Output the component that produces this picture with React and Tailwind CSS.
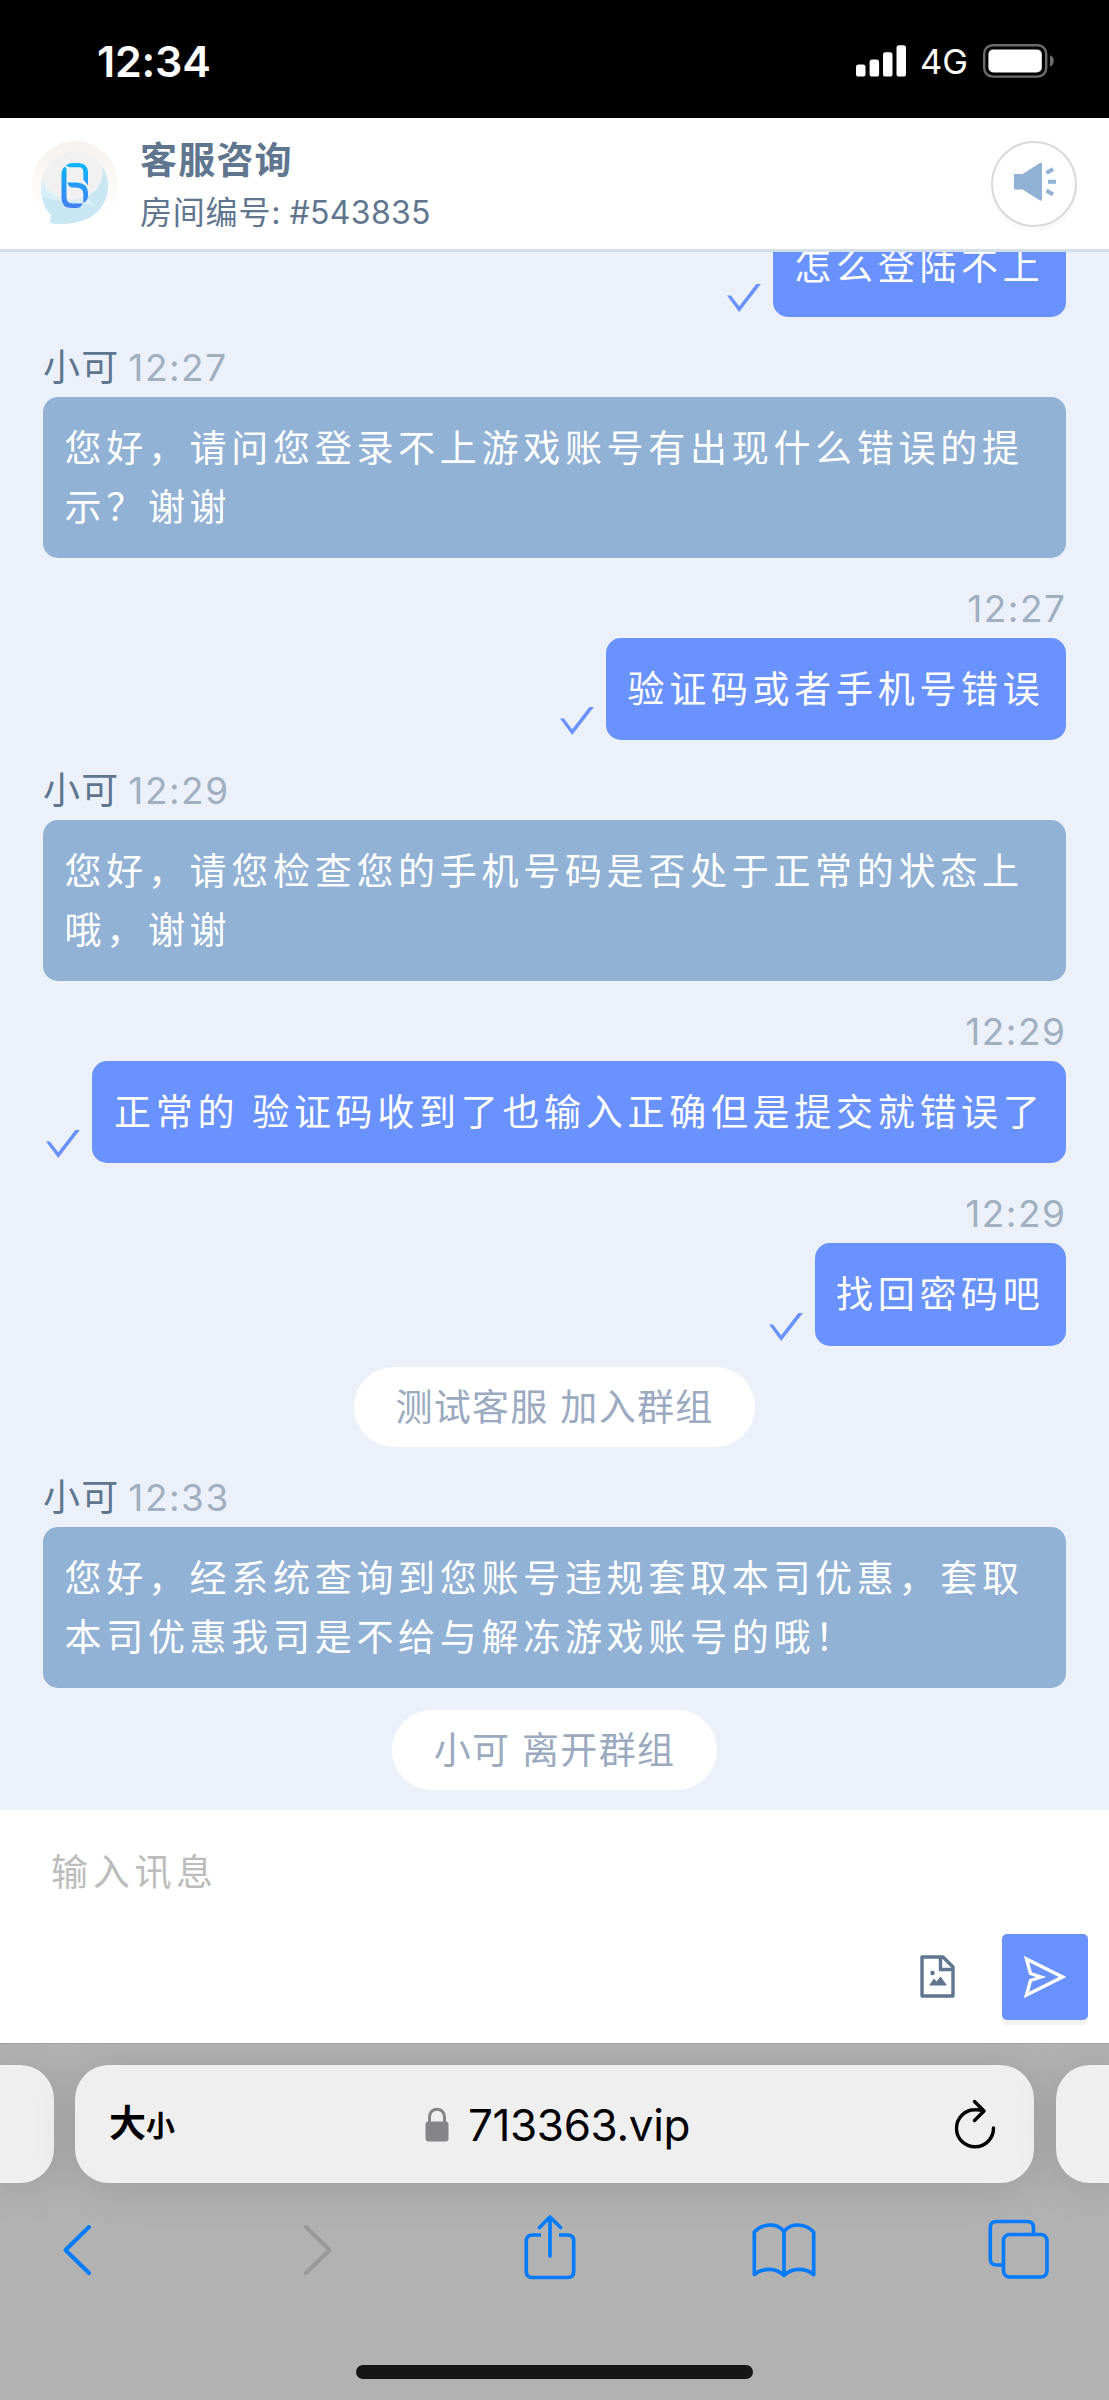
const FONT = "font-['Inter','Noto_Sans_CJK_SC',sans-serif]";

function Check() {
  return (
    <svg className="mr-[12px] mb-[5px] h-[28px] w-[34px] shrink-0" viewBox="0 0 34 28" fill="#6992ff">
      <path d="M0 11.5H4L12.200 22.300 29.300 0H33.900L12.200 28Z" />
    </svg>
  );
}

function Outgoing({ time, text }) {
  return (
    <div className="mt-[21.6px] shrink-0">
      {time && (
        <div className="mr-[-0.5px] h-[58.3px] text-right text-[37px] leading-[58.3px] tracking-[1.5px] text-[#a0b0c0]">{time}</div>
      )}
      <div className="flex items-end justify-end">
        <Check />
        <div className="rounded-[15px] bg-[#6992ff] px-[21.5px] py-[21.6px] text-[37px] leading-[59px] tracking-[4.7px] [word-spacing:-2px] whitespace-nowrap text-white">
          {text}
        </div>
      </div>
    </div>
  );
}

function Incoming({ name, time, lines }) {
  return (
    <div className="mt-[21.6px] shrink-0">
      <div className="h-[58.3px] text-[37px] leading-[58.3px] tracking-[1.3px] whitespace-nowrap">
        <span className="text-[#5f7690]">{name}</span>{" "}
        <span className="ml-[-3px] tracking-[1.5px] text-[#a0b0c0]">{time}</span>
      </div>
      <div className="rounded-[15px] bg-[#91b2d5] px-[21.5px] py-[21.6px] text-[37px] leading-[59px] tracking-[4.7px] text-white">
        {lines.map((l) => (
          <p key={l} className="whitespace-nowrap">{l}</p>
        ))}
      </div>
    </div>
  );
}

function Notice({ text }) {
  return (
    <div className="mt-[21.3px] flex shrink-0 justify-center">
      <div className="h-[80.3px] rounded-full bg-white px-[41.5px] text-[37px] leading-[82px] tracking-[1.3px] whitespace-nowrap text-[#9aaabf]">{text}</div>
    </div>
  );
}

function StatusBar() {
  return (
    <div className="flex h-[118px] shrink-0 items-center bg-black pr-[54px] pl-[97px] text-white">
      <span className="mt-[3px] text-[43px] leading-[50px] font-semibold tracking-[-0.2px]">12:34</span>
      <svg className="mt-[3px] ml-auto h-[32px] w-[50px]" viewBox="0 0 50 32" fill="#fff">
        <rect x="0" y="19.5" width="9.5" height="12" rx="2.6" />
        <rect x="13.6" y="14.5" width="9.5" height="17" rx="2.6" />
        <rect x="27" y="7.3" width="9.5" height="24.2" rx="2.6" />
        <rect x="40.5" y="0.3" width="9.5" height="31.2" rx="2.6" />
      </svg>
      <span className="mt-[6px] ml-[14px] w-[63px] text-[34.5px] leading-[40px]">4G</span>
      <svg className="mt-[3px] h-[34px] w-[72px]" viewBox="0 0 72 34">
        <rect x="1.2" y="1.2" width="62" height="31.4" rx="8.5" fill="none" stroke="#6b6b6b" strokeWidth="2.4" />
        <rect x="5.4" y="5.4" width="53.4" height="23" rx="5" fill="#fff" />
        <path d="M67 11.3C72 12.5 72 21.5 67 22.7Z" fill="#6b6b6b" />
      </svg>
    </div>
  );
}

function Logo() {
  return (
    <svg className="h-[86px] w-[86px] shrink-0" viewBox="0 0 86 86">
      <defs>
        <linearGradient id="ring" x1="0" y1="0" x2="0" y2="1">
          <stop offset="0" stopColor="#f7f2ef" />
          <stop offset="0.95" stopColor="#ffffff" />
        </linearGradient>
        <linearGradient id="mark" gradientUnits="userSpaceOnUse" x1="0" y1="21" x2="0" y2="66">
          <stop offset="0" stopColor="#08b8ff" />
          <stop offset="1" stopColor="#4280f2" />
        </linearGradient>
        <clipPath id="drop">
          <path d="M18 82L19 74C6 62 6 34 20 21 36 5 62 8 72 28 82 50 72 70 55 78 43 83 30 84 18 82Z" />
        </clipPath>
      </defs>
      <circle cx="43" cy="43" r="43" fill="url(#ring)" />
      <g clipPath="url(#drop)">
        <rect width="86" height="86" fill="#c8e7f3" />
        <path d="M0 50C20 64 44 58 64 66L40 40 0 30Z" fill="#d9eef6" />
        <ellipse cx="40" cy="31" rx="31" ry="28" fill="#f1f1f2" />
      </g>
      <g fill="url(#mark)">
        <path d="M34 24.500Q36 22 40 22H46Q56 22 56 32V44.500L51.300 38.500V31Q51.300 26.300 47 26.300H38Q35.500 26.300 34 24.500Z" />
        <path d="M33 25.500L34.500 27.500V56Q34.500 62.500 40 62.500H50.500Q49 67 44 67H40Q29.500 67 29.500 57V33Q29.500 28 33 25.500Z" />
        <path d="M35.500 41.500H45Q56 42.500 56 52V55Q56 59.500 51.300 62V53Q51.300 46.500 44 46.500H40Q36.500 46 35.500 41.500Z" />
      </g>
    </svg>
  );
}

function Header() {
  return (
    <div className="flex h-[134px] shrink-0 items-center border-b-[3px] border-[#d4dfe9] bg-white pr-[32px] pl-[32px] text-[#60768f]">
      <Logo />
      <div className="mt-[6px] ml-[22px]">
        <div className="text-[37px] leading-[52px] font-bold tracking-[1.2px]">客服咨询</div>
        <div className="text-[32px] leading-[52px] tracking-[0.8px] whitespace-nowrap [word-spacing:-1.5px]">
          房间编号: <span className="tracking-[0.3px]">#543835</span>
        </div>
      </div>
      <div className="ml-auto flex h-[86px] w-[86px] items-center justify-center rounded-full border-[2.4px] border-[#d9d9d9] shadow-[0_5px_1px_rgba(0,0,0,0.02)]">
        <svg className="mb-[3px] h-[40px] w-[43px]" viewBox="0 0 43 40">
          <path d="M1 12H9.500L27 1Q29 0 29 2V37Q29 39.500 27 38.500L9.500 27.500H1Z" fill="#91b2d5" />
          <path d="M33.500 11L40 7M35 19.800H43M33.500 28.500L40 32.500" stroke="#91b2d5" strokeWidth="4" />
        </svg>
      </div>
    </div>
  );
}

function Composer() {
  return (
    <div className="flex h-[233px] shrink-0 flex-col justify-between bg-white pt-[33px] pr-[21px] pb-[23.500px] pl-[51px]">
      <div className="text-[37px] leading-[59px] tracking-[4.7px] text-[#bcbcbc]">输入讯息</div>
      <div className="flex items-center justify-end">
        <svg className="mr-[47px] h-[43px] w-[35px]" viewBox="0 0 35 43" fill="none">
          <path d="M2 2H23L33 12V41H2Z" stroke="#60768f" strokeWidth="3.4" strokeLinejoin="round" />
          <path d="M20.500 2V14.500H33" stroke="#60768f" strokeWidth="3.400" />
          <circle cx="12.500" cy="18" r="2.200" fill="#60768f" />
          <path d="M9 30.500L14 23.500 16.500 26.500 20.500 21.500 27 30.500Z" fill="#60768f" />
        </svg>
        <div className="flex h-[86px] w-[86px] items-center justify-center rounded-[5px] bg-[#6992ff] shadow-[0_5px_1px_rgba(0,0,0,0.05)]">
          <svg className="h-[42px] w-[42px]" viewBox="0 0 42 42" fill="none">
            <path d="M2.500 3L38.500 21 2.500 39 6.500 24.500 17 21 6.500 17.500Z" stroke="#fff" strokeWidth="3.400" />
          </svg>
        </div>
      </div>
    </div>
  );
}

function Browser() {
  const shadow = "shadow-[0_4px_44px_rgba(0,0,0,0.13)]";
  return (
    <div className="flex h-[357px] shrink-0 flex-col overflow-hidden border-t border-[#a0a0a0] bg-[#b2b2b2]">
      <div className="mt-[21px] flex h-[118px] shrink-0 gap-[21.500px]">
        <div className={"w-[53.500px] shrink-0 rounded-r-[34px] bg-[#efefef] " + shadow} />
        <div className={"grid w-[959px] shrink-0 grid-cols-[240px_1fr_240px] items-center rounded-[34px] bg-[#efefef] text-black " + shadow}>
          <div className="flex items-baseline pt-[2px] pl-[34px] font-bold">
            <span className="text-[37px] leading-[50px]">大</span>
            <span className="text-[29px] leading-[50px]">小</span>
          </div>
          <div className="flex items-center justify-center pl-[6px]">
            <svg className="mr-[19px] h-[35px] w-[24px]" viewBox="0 0 24 35">
              <rect x="0.500" y="14.500" width="23" height="20" rx="3" fill="#858587" />
              <path d="M4.500 16V10C4.500 -0.500 19.500 -0.500 19.500 10V16" fill="none" stroke="#858587" strokeWidth="3" />
            </svg>
            <span className="mt-[1px] text-[44px] leading-[50px] tracking-[-0.350px]">713363.vip</span>
          </div>
          <svg className="mr-[38px] mb-[1px] h-[50px] w-[42px] justify-self-end" viewBox="0 0 42 50" fill="none" stroke="#000" strokeWidth="3.400" strokeLinecap="round" strokeLinejoin="round">
            <path d="M39.500 29A18.500 18.500 0 1 1 21 10.800Q25.500 10.600 29.500 12" />
            <path d="M20.500 2.500L30 12 20.500 21.500" />
          </svg>
        </div>
        <div className={"w-[60px] shrink-0 rounded-l-[34px] bg-[#efefef] " + shadow} />
      </div>
      <div className="mt-[32px] flex h-[68px] shrink-0 items-center pl-[62px]">
        <svg className="h-[53px] w-[30px] shrink-0" viewBox="0 0 30 53" fill="none" stroke="#007aff" strokeWidth="4" strokeLinecap="round" strokeLinejoin="round">
          <path d="M27 4L3.500 27 27 50" />
        </svg>
        <svg className="ml-[211px] h-[53px] w-[30px] shrink-0" viewBox="0 0 30 53" fill="none" stroke="#999" strokeWidth="4" strokeLinecap="round" strokeLinejoin="round">
          <path d="M3 4L26.500 27 3 50" />
        </svg>
        <svg className="mb-[2px] ml-[191px] h-[66px] w-[52px] shrink-0" viewBox="0 0 52 66" fill="none" stroke="#007aff" strokeWidth="3.600" strokeLinecap="round" strokeLinejoin="round">
          <path d="M17 20H8.500Q2.300 20 2.300 26V56.500Q2.300 62.500 8.500 62.500H43.500Q49.700 62.500 49.700 56.500V26Q49.700 20 43.500 20H35" strokeLinecap="butt" />
          <path d="M26 41V2.500M15.500 12.500L26 2 36.500 12.500" />
        </svg>
        <svg className="mt-[1px] ml-[176px] h-[56px] w-[64px] shrink-0" viewBox="0 0 64 56" fill="none" stroke="#007aff" strokeWidth="3.600" strokeLinecap="round" strokeLinejoin="round">
          <path d="M32 10C27 1.500 12 0 2.300 10V52.500C10 46 24 45 32 53.500 40 45 54 46 61.700 52.500V10C52 0 37 1.500 32 10V53" />
        </svg>
        <svg className="ml-[172px] h-[60px] w-[61px] shrink-0" viewBox="0 0 61 60" fill="none" stroke="#007aff" strokeWidth="3.600">
          <path d="M14.500 46H8.500Q2.300 46 2.300 40V8.500Q2.300 2.500 8.500 2.500H39Q45.500 2.500 45.500 8.500V14.500" />
          <rect x="15.500" y="15.500" width="43.500" height="42.500" rx="6" />
        </svg>
      </div>
      <div className="mt-[82px] ml-[356px] h-[14px] w-[397px] shrink-0 rounded-full bg-[#161616]" />
    </div>
  );
}

export default function App() {
  return (
    <div className={"flex h-[2400px] w-[1109px] flex-col overflow-hidden bg-white " + FONT}>
      <StatusBar />
      <Header />
      <div className="flex min-h-0 flex-1 flex-col justify-end overflow-hidden bg-[#ecf1f9] px-[43px] pb-[20.200px]">
        <Outgoing text="怎么登陆不上" />
        <Incoming name="小可" time="12:27" lines={["您好，请问您登录不上游戏账号有出现什么错误的提", "示？谢谢"]} />
        <Outgoing time="12:27" text="验证码或者手机号错误" />
        <Incoming name="小可" time="12:29" lines={["您好，请您检查您的手机号码是否处于正常的状态上", "哦，谢谢"]} />
        <Outgoing time="12:29" text="正常的 验证码收到了也输入正确但是提交就错误了" />
        <Outgoing time="12:29" text="找回密码吧" />
        <Notice text="测试客服 加入群组" />
        <Incoming name="小可" time="12:33" lines={["您好，经系统查询到您账号违规套取本司优惠，套取", "本司优惠我司是不给与解冻游戏账号的哦！"]} />
        <Notice text="小可 离开群组" />
      </div>
      <Composer />
      <Browser />
    </div>
  );
}
